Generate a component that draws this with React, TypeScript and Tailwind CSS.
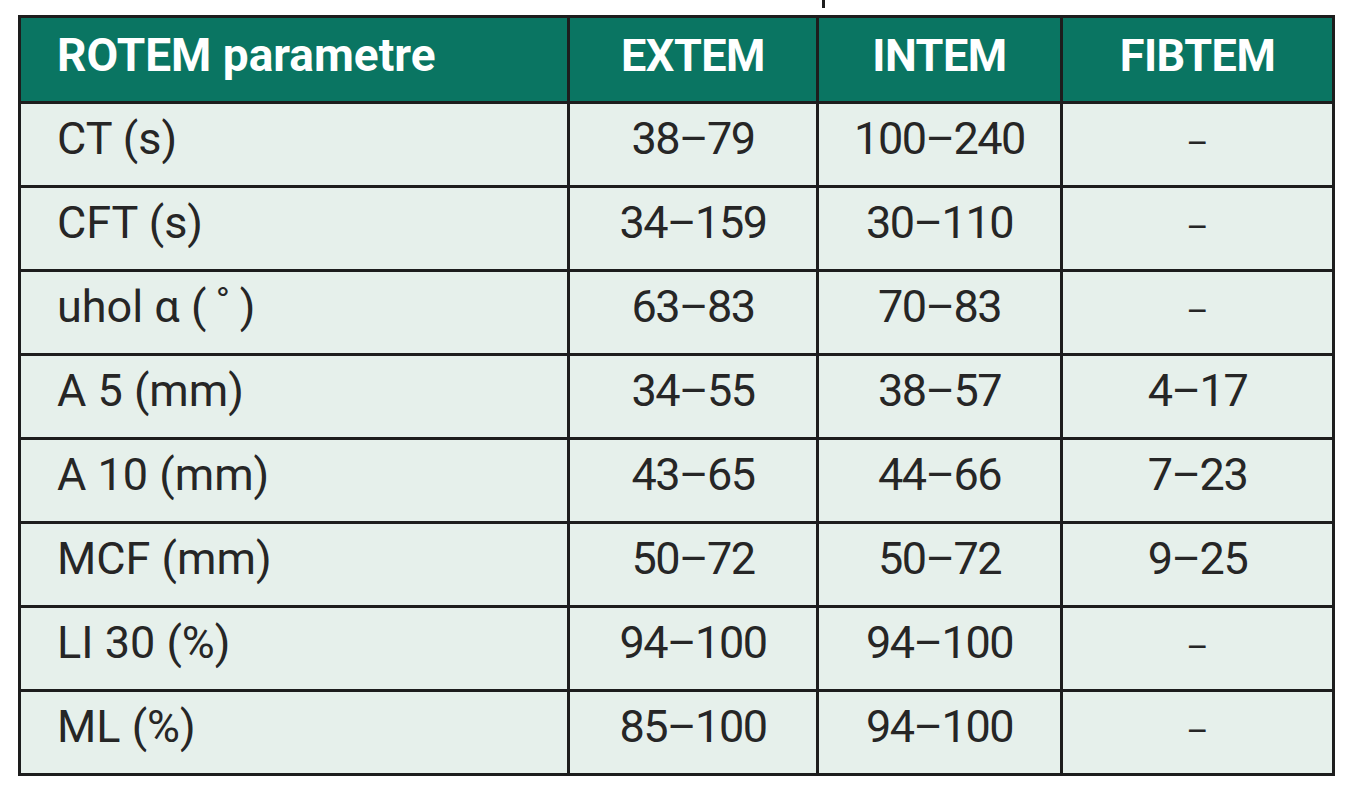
import React from "react";

const rows: [string, string, string, string][] = [
  ["CT (s)", "38–79", "100–240", ""],
  ["CFT (s)", "34–159", "30–110", ""],
  ["uhol α (\u2009˚\u2009)", "63–83", "70–83", ""],
  ["A 5 (mm)", "34–55", "38–57", "4–17"],
  ["A 10 (mm)", "43–65", "44–66", "7–23"],
  ["MCF (mm)", "50–72", "50–72", "9–25"],
  ["LI 30 (%)", "94–100", "94–100", ""],
  ["ML (%)", "85–100", "94–100", ""],
];

function Range({ v }: { v: string }) {
  if (v === "") {
    return <span className="text-[34px] leading-none mt-[8px]">–</span>;
  }
  return <span className="tracking-[-1.5px]">{v}</span>;
}

export default function App() {
  return (
    <div
      className="w-[1363px] h-[800px] bg-white"
      style={{ fontFamily: "Roboto, 'Liberation Sans', sans-serif" }}
    >
      <div className="h-[15px] pl-[822px]">
        <div className="w-[3px] h-[8px] bg-[#1d1d1d]" />
      </div>
      <div className="ml-[18px] w-[1317px] bg-[#1d1d1d] p-[3px] grid grid-cols-[546px_246px_241px_269px] gap-[3px]">
        <div className="h-[83px] bg-[#0a7562] text-white font-bold text-[46px] flex items-center pl-[36px] pb-[8px]">
          ROTEM parametre
        </div>
        {["EXTEM", "INTEM", "FIBTEM"].map((h) => (
          <div
            key={h}
            className="h-[83px] bg-[#0a7562] text-white font-bold text-[45px] tracking-[-0.5px] flex items-center justify-center pb-[8px]"
          >
            {h}
          </div>
        ))}
        {rows.map((r) => (
          <React.Fragment key={r[0]}>
            <div className="h-[81px] bg-[#e6f0eb] text-[#262626] text-[45px] flex items-center pl-[36px] pb-[12px]">
              {r[0]}
            </div>
            {r.slice(1).map((v, i) => (
              <div
                key={i}
                className="h-[81px] bg-[#e6f0eb] text-[#262626] text-[45px] flex items-center justify-center pb-[12px]"
              >
                <Range v={v} />
              </div>
            ))}
          </React.Fragment>
        ))}
      </div>
    </div>
  );
}
